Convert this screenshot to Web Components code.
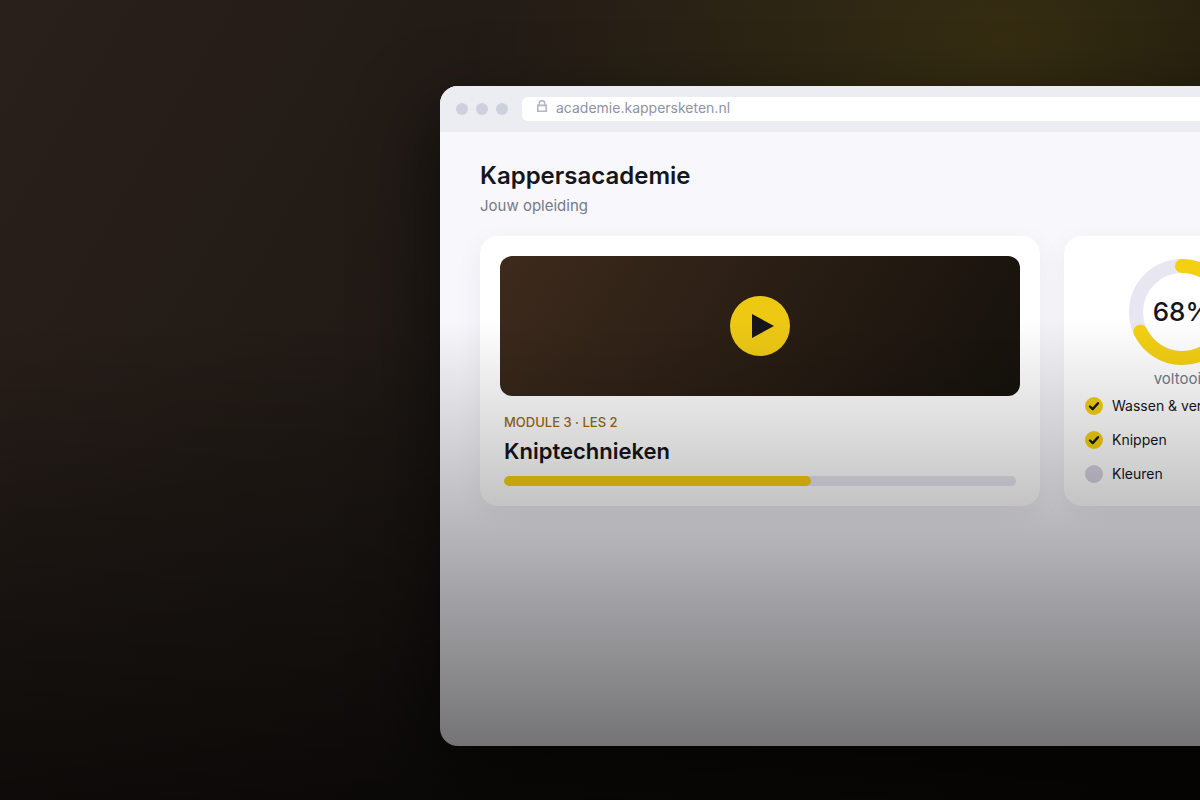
<!DOCTYPE html>
<html lang="nl">
<head>
<meta charset="utf-8">
<meta name="viewport" content="width=device-width, initial-scale=1">
<title>Kappersacademie</title>
<style>
  body { margin: 0; background: #110e0b; font-family: Inter, "Open Sans", sans-serif; color: #15151b; }
</style>
</head>
<body>
<academy-scene>
  <browser-window address="academie.kappersketen.nl">
    <course-header>
      <span slot="title">Kappersacademie</span>
      <span slot="subtitle">Jouw opleiding</span>
    </course-header>
    <card-row>
      <lesson-card value="60">
        <span slot="module">MODULE 3 · LES 2</span>
        <span slot="title">Kniptechnieken</span>
      </lesson-card>
      <progress-card>
        <progress-ring slot="ring" value="68"></progress-ring>
        <span slot="caption">voltooid</span>
        <check-item done>Wassen &amp; verzorgen</check-item>
        <check-item done>Knippen</check-item>
        <check-item>Kleuren</check-item>
      </progress-card>
    </card-row>
  </browser-window>
</academy-scene>
<script>
  function define(name, render) {
    customElements.define(name, class extends HTMLElement {
      constructor() {
        super();
        this.attachShadow({ mode: 'open' }).innerHTML = render(this);
      }
    });
  }

  define('academy-scene', () => `
    <style>
      :host {
        position: relative; box-sizing: border-box; min-height: 100vh; overflow: hidden;
        display: grid; grid-template-columns: 11fr 19fr; padding: 86px 0 54px;
        background:
          radial-gradient(ellipse 540px 420px at 84% 5%, rgba(243, 208, 22, .13), transparent),
          linear-gradient(120deg, #2a201b, #1c1713 50%, #100d09);
      }
      main { grid-column: 2; min-width: 0; display: grid; }
      .shade {
        position: absolute; inset: 0; pointer-events: none;
        background: linear-gradient(transparent 40%, rgba(0, 0, 0, .6));
      }
    </style>
    <main><slot></slot></main>
    <div class="shade"></div>`);

  define('browser-window', el => `
    <style>
      :host {
        display: flex; flex-direction: column; min-width: 900px; border-radius: 18px; overflow: hidden;
        background: #f8f7fc; box-shadow: 0 30px 80px rgba(0, 0, 0, .6);
      }
      header { display: flex; align-items: center; gap: 14px; height: 46px; padding: 0 16px; background: #ecedf2; }
      .dots { display: flex; gap: 8px; }
      .dots i { width: 12px; height: 12px; border-radius: 50%; background: #cdd0dd; }
      label {
        flex: 1; display: flex; align-items: center; gap: 8px; height: 24px; padding: 0 14px;
        border-radius: 6px; background: #fff; box-sizing: border-box;
      }
      label svg { align-self: flex-start; margin-top: 3px; }
      input {
        flex: 1; border: 0; padding: 0 0 2px; outline: 0; background: none;
        font: 14px/20px Inter, sans-serif; color: #8f93a3;
      }
      .page { flex: 1; padding: 28px 40px 40px; }
    </style>
    <header>
      <div class="dots"><i></i><i></i><i></i></div>
      <label>
        <svg width="12" height="13" viewBox="0 0 12 13" fill="none" stroke="#b1b5c4" stroke-width="1.6" aria-hidden="true">
          <path d="M1.8 5.4h8.4v5.8H1.8zM3.3 5.5V3.4a2.7 2.7 0 0 1 5.4 0v2.1"/>
        </svg>
        <input type="text" aria-label="Adres" spellcheck="false" readonly value="${el.getAttribute('address')}">
      </label>
    </header>
    <div class="page"><slot></slot></div>`);

  define('course-header', () => `
    <style>
      :host { display: block; margin-bottom: 20px; }
      h1 { margin: 0; font-size: 24px; line-height: 32px; font-weight: 600; color: #15151b; }
      p { margin: 4px 0 0; font-size: 15px; line-height: 20px; color: #747a8a; }
    </style>
    <h1><slot name="title"></slot></h1>
    <p><slot name="subtitle"></slot></p>`);

  define('card-row', () => `
    <style>
      :host { display: grid; grid-template-columns: 1fr 236px; gap: 24px; }
    </style>
    <slot></slot>`);

  const cardBox = `background: #fff; border-radius: 18px; box-shadow: 0 8px 28px rgba(30, 20, 50, .06);`;

  define('lesson-card', el => `
    <style>
      :host { display: block; padding: 20px; ${cardBox} }
      .video {
        display: grid; place-items: center; height: 140px; border-radius: 12px;
        background: linear-gradient(120deg, #3d2a1c, #15110c);
      }
      button { width: 60px; height: 60px; padding: 0; border: 0; background: none; cursor: pointer; }
      button svg { display: block; }
      .info { padding: 16px 4px 0; }
      p { margin: 0; font-size: 13px; line-height: 20px; font-weight: 500; color: #9a6b15; }
      h2 { margin: 4px 0 10px; font-size: 22px; line-height: 30px; font-weight: 600; }
      .bar { height: 10px; border-radius: 5px; background: #e8e6f0; overflow: hidden; }
      .bar div { height: 100%; border-radius: 5px; background: #f4d013; }
    </style>
    <div class="video">
      <button type="button" aria-label="Les afspelen">
        <svg width="60" height="60" viewBox="0 0 60 60"><circle cx="30" cy="30" r="30" fill="#edc914"/><path d="M22 18v24l22-12z" fill="#15151b"/></svg>
      </button>
    </div>
    <div class="info">
      <p><slot name="module"></slot></p>
      <h2><slot name="title"></slot></h2>
      <div class="bar" role="progressbar" aria-label="Voortgang les" aria-valuenow="${el.getAttribute('value')}">
        <div style="width: ${el.getAttribute('value')}%"></div>
      </div>
    </div>`);

  define('progress-card', () => `
    <style>
      :host { display: flex; flex-direction: column; padding: 23px 21px; ${cardBox} }
      .caption { margin: 4px 0 8px; text-align: center; font-size: 15px; line-height: 20px; color: #747a8a; }
      .list { display: flex; flex-direction: column; gap: 16px; }
    </style>
    <slot name="ring"></slot>
    <div class="caption"><slot name="caption"></slot></div>
    <div class="list"><slot></slot></div>`);

  define('progress-ring', el => `
    <style>
      :host { display: grid; place-items: center; }
      svg, span { grid-area: 1 / 1; }
      span { font-size: 26px; line-height: 32px; font-weight: 500; }
    </style>
    <svg width="106" height="106" viewBox="0 0 106 106" fill="none" stroke-width="14" aria-hidden="true">
      <circle cx="53" cy="53" r="46" stroke="#e8e6f0"/>
      <circle cx="53" cy="53" r="46" stroke="#f4d013" stroke-linecap="round" pathLength="100"
        stroke-dasharray="${el.getAttribute('value')} 100" transform="rotate(-90 53 53)"/>
    </svg>
    <span>${el.getAttribute('value')}%</span>`);

  define('check-item', el => `
    <style>
      :host { display: block; }
      label { display: flex; align-items: center; gap: 9px; height: 18px; font-size: 14px; line-height: 18px; }
      .box { display: grid; width: 18px; height: 18px; }
      input, svg { grid-area: 1 / 1; }
      input { appearance: none; margin: 0; width: 18px; height: 18px; border-radius: 50%; background: #d6d2e0; }
      input:checked { background: #f4d013; }
      svg { visibility: hidden; pointer-events: none; z-index: 1; }
      input:checked + svg { visibility: visible; }
    </style>
    <label>
      <span class="box">
        <input type="checkbox" ${el.hasAttribute('done') ? 'checked' : ''}>
        <svg width="18" height="18" viewBox="0 0 18 18" fill="none" stroke="#15151b" stroke-width="2.4" stroke-linecap="round" stroke-linejoin="round"><path d="M5 9.5l2.7 2.6L13 6.2"/></svg>
      </span>
      <span><slot></slot></span>
    </label>`);
</script>
</body>
</html>
